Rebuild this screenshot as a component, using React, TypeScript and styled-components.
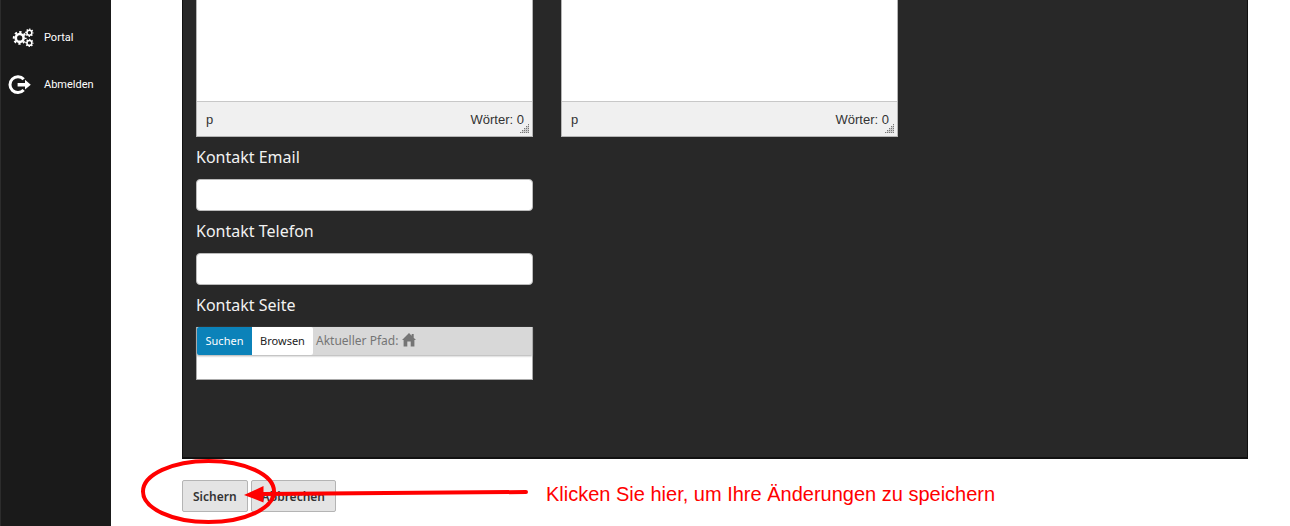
import React from "react";
import styled, { createGlobalStyle } from "styled-components";

const GlobalStyle = createGlobalStyle`
  *, *::before, *::after { box-sizing: border-box; }
  body { margin: 0; background: #fff; }
  button, input, textarea { font: inherit; }
`;

const label = `"Noto Sans", "Open Sans", sans-serif`;
const arial = `"Liberation Sans", Arial, sans-serif`;

const Page = styled.div`
  display: flex;
  min-height: 100vh;
  overflow: hidden;
  font-family: ${label};
`;

const Sidebar = styled.nav`
  flex: 0 0 111px;
  padding-top: 14px;
  background: #1a1a1a;
  border-left: 1px solid #2c2c2c;
`;

const NavLink = styled.a`
  display: flex;
  align-items: center;
  gap: 8px;
  height: 47px;
  padding-left: 5px;
  color: #fff;
  font: 11px/16px Roboto, sans-serif;
  text-decoration: none;
`;

const Main = styled.main`
  flex: 1;
  min-width: 0;
  padding: 0 42px 0 71px;
`;

const Panel = styled.section`
  padding: 0 13px 77px;
  background: #282828;
  border: solid #111;
  border-width: 0 1px 2px;
`;

const Columns = styled.div`
  display: flex;
  gap: 28px;
`;

const Column = styled.div`
  flex: 0 1 337px;
  min-width: 0;
`;

const Editor = styled.div`
  border: 1px solid #b5b5b5;
  border-top: 0;
  background: #f0f0f0;
`;

const EditorText = styled.textarea`
  display: block;
  width: 100%;
  height: 101px;
  border: 0;
  resize: none;
  outline: 0;
  background: #fff;
`;

const StatusBar = styled.div`
  position: relative;
  display: flex;
  justify-content: space-between;
  align-items: center;
  height: 35px;
  padding: 1px 8px 0 9px;
  border-top: 1px solid #c8c8c8;
  color: #333;
  font: 13px/18px ${arial};
`;

const Grip = styled.svg`
  position: absolute;
  right: 3px;
  bottom: 3px;
`;

const Label = styled.label`
  display: block;
  padding: 9px 0 11px;
  color: #f2f2f2;
  font-size: 16px;
  line-height: 22px;
`;

const TextInput = styled.input`
  display: block;
  width: 100%;
  height: 32px;
  padding: 0 8px;
  border: 1px solid #bbb;
  border-radius: 4px;
  background: #fff;
`;

const Picker = styled.div`
  border: 1px solid #aaa;
  border-top: 0;
  background: #fff;
`;

const PickerBar = styled.div`
  display: flex;
  align-items: center;
  height: 28px;
  background: #d8d8d8;
  box-shadow: 0 1px 2px #aaa;
  color: #757575;
  font-size: 12px;
`;

const Tab = styled.button<{ $active?: boolean }>`
  height: 28px;
  width: ${(p) => (p.$active ? 55 : 61)}px;
  padding: 0 0 2px;
  border: 0;
  border-radius: ${(p) => (p.$active ? "2px 0 0 2px" : "0 2px 2px 0")};
  background: ${(p) => (p.$active ? "#0b82b9" : "#fff")};
  color: ${(p) => (p.$active ? "#fff" : "#222")};
  font-size: 11px;
`;

const Path = styled.span`
  padding: 0 4px 2px 3px;
`;

const HomeLink = styled.a`
  display: flex;
  padding-bottom: 2px;
`;

const PickerInput = styled.input`
  display: block;
  width: 100%;
  height: 24px;
  padding: 0 8px;
  border: 0;
  background: transparent;
`;

const Actions = styled.div`
  position: relative;
  display: flex;
  gap: 3px;
  padding-top: 21px;
`;

const Button = styled.button`
  height: 32px;
  padding: 0 10px;
  border: 1px solid #b4b4b4;
  border-radius: 2px;
  background: #e4e4e4;
  color: #333;
  font-size: 12px;
  font-weight: 600;
`;

const Marker = styled.svg`
  position: absolute;
  left: -43px;
  top: -2px;
  pointer-events: none;
`;

const Hint = styled.p`
  position: absolute;
  left: 364px;
  top: 23px;
  margin: 0;
  color: #f00;
  font: 20px/24px ${arial};
  white-space: nowrap;
`;

function Gear({ x, y, r, hole }: { x: number; y: number; r: number; hole: number }) {
  const body = r * 0.76;
  const ring = (body + hole) / 2;
  const tooth = (Math.PI * 2 * (r - 1)) / 16;
  return (
    <g fill="none" stroke="#fff">
      <circle cx={x} cy={y} r={ring} strokeWidth={body - hole} />
      <circle cx={x} cy={y} r={r - 1} strokeWidth="2" strokeDasharray={`${tooth} ${tooth}`} strokeDashoffset={tooth / 2} />
    </g>
  );
}

const GearsIcon = () => (
  <svg width="30" height="22" viewBox="6 27 30 22" aria-hidden="true">
    <Gear x={19.7} y={37.9} r={6.9} hole={2.6} />
    <Gear x={29.4} y={32.7} r={4.2} hole={1.7} />
    <Gear x={29.4} y={42.9} r={4.2} hole={1.7} />
  </svg>
);

const LogoutIcon = () => (
  <svg width="30" height="22" viewBox="6 74 30 22" aria-hidden="true">
    <path d="M23.7 79.3A7.9 7.9 0 1 0 23.7 90" fill="none" stroke="#fff" strokeWidth="3" />
    <path d="M17.6 82.9H25V79.8L30.8 84.7L25 89.6V86.5H17.6Z" fill="#fff" />
  </svg>
);

const HomeIcon = () => (
  <svg width="14" height="14" viewBox="0 0 14 14" aria-hidden="true">
    <path d="M7 0L9.7 2.7V1H11.7V4.7L14 7H12.4V13.5H8.7V8.5H5.3V13.5H1.6V7H0Z" fill="#757575" />
  </svg>
);

const steps = [0, 1, 2, 3, 4];

function TextEditor({ name }: { name: string }) {
  return (
    <Editor>
      <EditorText aria-label={name} />
      <StatusBar>
        <span>p</span>
        <span>Wörter: 0</span>
        <Grip width="9" height="9" viewBox="0 0 9 9" aria-hidden="true">
          <path d="M0 9V8H2V6H4V4H6V2H8V0H9V9Z" fill="#ccc" />
          {steps.map((c) =>
            steps.slice(4 - c).map((r) => (
              <rect key={`${c}-${r}`} x={c * 2} y={r * 2} width="1" height="1" fill="#777" />
            ))
          )}
        </Grip>
      </StatusBar>
    </Editor>
  );
}

export default function App() {
  return (
    <Page>
      <GlobalStyle />
      <Sidebar>
        <NavLink href="#portal"><GearsIcon />Portal</NavLink>
        <NavLink href="#abmelden"><LogoutIcon />Abmelden</NavLink>
      </Sidebar>
      <Main>
        <Panel>
          <Columns>
            <Column>
              <TextEditor name="Text 1" />
              <Label htmlFor="email">Kontakt Email</Label>
              <TextInput id="email" type="email" />
              <Label htmlFor="phone">Kontakt Telefon</Label>
              <TextInput id="phone" type="tel" />
              <Label htmlFor="page">Kontakt Seite</Label>
              <Picker>
                <PickerBar>
                  <Tab type="button" $active>Suchen</Tab>
                  <Tab type="button">Browsen</Tab>
                  <Path>Aktueller Pfad:</Path>
                  <HomeLink href="#home" aria-label="Home"><HomeIcon /></HomeLink>
                </PickerBar>
                <PickerInput id="page" type="text" />
              </Picker>
            </Column>
            <Column>
              <TextEditor name="Text 2" />
            </Column>
          </Columns>
        </Panel>
        <Actions>
          <Button type="submit">Sichern</Button>
          <Button type="button">Abbrechen</Button>
          <Marker width="400" height="70" viewBox="139 457 400 70" aria-hidden="true">
            <ellipse cx="208.5" cy="491.5" rx="65.5" ry="30.5" fill="none" stroke="#f00" strokeWidth="4" />
            <path d="M262 494L526 492" stroke="#f00" strokeWidth="4" strokeLinecap="round" />
            <path d="M244 495L263.5 486V502.5Z" fill="#f00" />
          </Marker>
          <Hint>Klicken Sie hier, um Ihre Änderungen zu speichern</Hint>
        </Actions>
      </Main>
    </Page>
  );
}
